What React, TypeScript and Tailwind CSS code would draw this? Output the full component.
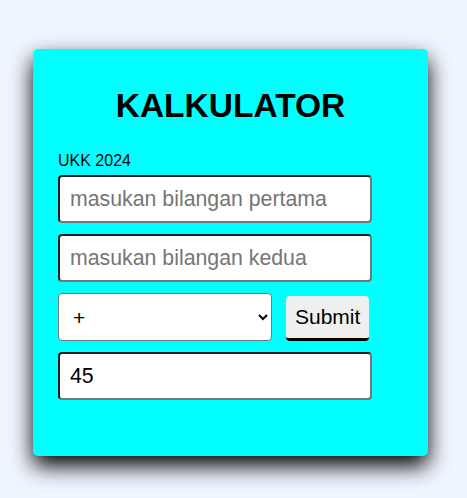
import { useState } from "react";

const inputCls =
  "block w-[314px] h-[48px] px-[10px] text-[21.3px] leading-[24px] bg-white text-black rounded-[4px] border-2 [border-style:solid] border-t-[#1f1f1f] border-l-[#1f1f1f] border-b-[#767676] border-r-[#767676] placeholder:text-[#757575] outline-none";

export default function App() {
  const [a, setA] = useState("");
  const [b, setB] = useState("");
  const [op, setOp] = useState("+");

  return (
    <div
      className="min-h-screen h-[498px] bg-[#f0f6ff] pt-[49px] pl-[33px] overflow-hidden"
      style={{ fontFamily: '"Liberation Sans", Arial, sans-serif' }}
    >
      <div className="w-[395px] h-[407px] rounded-[5px] bg-[#00ffff] shadow-[0_10px_22px_rgba(0,0,0,1)] pt-[38px] px-[25px]">
        <h1 className="text-center text-[33.5px] leading-[37px] font-bold text-black">KALKULATOR</h1>

        <p className="mt-[28px] text-[16px] leading-[18px] text-black">UKK 2024</p>

        <div className="mt-[5px] flex flex-col gap-[11px]">
          <input
            className={inputCls}
            placeholder="masukan bilangan pertama"
            value={a}
            onChange={(e) => setA(e.target.value)}
          />
          <input
            className={inputCls}
            placeholder="masukan bilangan kedua"
            value={b}
            onChange={(e) => setB(e.target.value)}
          />

          <div className="flex items-end gap-[14px]">
            <select
              value={op}
              onChange={(e) => setOp(e.target.value)}
              className="w-[214px] h-[48px] pl-[10px] pr-[4px] text-[21px] bg-white text-black rounded-[4px] border border-[#767676]"
            >
              <option value="+">+</option>
              <option value="-">-</option>
              <option value="*">*</option>
              <option value="/">/</option>
            </select>
            <button className="h-[45px] px-[9px] text-[21px] leading-[24px] bg-[#efefef] text-black rounded-[4px] border-b-[3px] border-black">
              Submit
            </button>
          </div>

          <input className={inputCls} value="45" readOnly />
        </div>
      </div>
    </div>
  );
}
